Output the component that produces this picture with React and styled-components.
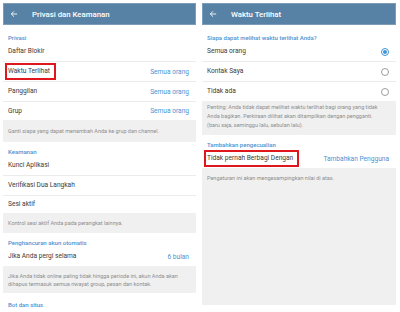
import React from "react"
import styled, { createGlobalStyle } from "styled-components"

const GlobalStyle = createGlobalStyle`
  body {
    margin: 0;
    background: #ffffff;
    font-family: Roboto, "Liberation Sans", sans-serif;
  }
`

const Page = styled.div`
  display: flex;
  gap: 6px;
  padding: 3px 4px 0 3px;
  width: 400px;
  height: 312px;
  box-sizing: border-box;
  overflow: hidden;
`

const Screen = styled.div`
  display: flex;
  flex-direction: column;
  width: ${props => props.width}px;
  height: ${props => props.height}px;
  background: #ffffff;
  overflow: hidden;
`

const Header = styled.div`
  display: flex;
  align-items: center;
  gap: 14px;
  height: 22px;
  flex-shrink: 0;
  padding-left: 7px;
  background: #5782a6;
  box-shadow: inset 0 0 0 1px #7c9dba;
`

const Title = styled.span`
  color: #ffffff;
  font-size: 7.8px;
  font-weight: 500;
`

const SectionLabel = styled.div`
  padding: ${props => props.top || 5}px 5px 0;
  line-height: 9px;
  font-size: 6px;
  font-weight: 500;
  color: #4a93d2;
  flex-shrink: 0;
`

const Row = styled.div`
  display: flex;
  align-items: center;
  justify-content: space-between;
  height: ${props => props.h || 20}px;
  box-sizing: border-box;
  padding: 0 7px 0 5px;
  flex-shrink: 0;
  font-size: 6.6px;
  color: #3a3a3a;
  border-bottom: ${props => (props.last ? "none" : "1px solid #ececec")};
`

const RowLabel = styled.span`
  position: relative;
  line-height: 9px;

  &::after {
    content: "";
    display: ${props => (props.marked ? "block" : "none")};
    position: absolute;
    top: -4px;
    bottom: -4px;
    left: -3px;
    right: -6px;
    border: 2px solid #e0161d;
  }
`

const Value = styled.span`
  color: #4a93d2;
`

const Note = styled.div`
  background: #f0f0f0;
  color: #8e8e8e;
  font-size: 5.5px;
  line-height: ${props => props.lh || 8}px;
  padding: ${props => props.pad || "7px 5px"};
  flex-shrink: 0;
`

const Fill = styled(Note)`
  flex: 1;
`

const Radio = styled.span`
  width: 8px;
  height: 8px;
  box-sizing: border-box;
  border-radius: 50%;
  border: 1px solid ${props => (props.on ? "#3f95d9" : "#9d9d9d")};
  display: flex;
  align-items: center;
  justify-content: center;

  &::after {
    content: "";
    display: ${props => (props.on ? "block" : "none")};
    width: 4px;
    height: 4px;
    border-radius: 50%;
    background: #3f95d9;
  }
`

const Back = () => (
  <svg width="8" height="8" viewBox="0 0 24 24" fill="none">
    <path
      d="M20 12H5M11 5l-7 7 7 7"
      stroke="#ffffff"
      strokeWidth="2.6"
      strokeLinecap="square"
    />
  </svg>
)

const App = () => {
  return (
    <>
      <GlobalStyle />
      <Page>
        <Screen width={193} height={309}>
          <Header>
            <Back />
            <Title>Privasi dan Keamanan</Title>
          </Header>
          <SectionLabel top={8}>Privasi</SectionLabel>
          <Row>
            <RowLabel>Daftar Blokir</RowLabel>
          </Row>
          <Row>
            <RowLabel marked>Waktu Terlihat</RowLabel>
            <Value>Semua orang</Value>
          </Row>
          <Row>
            <RowLabel>Panggilan</RowLabel>
            <Value>Semua orang</Value>
          </Row>
          <Row last h={18}>
            <RowLabel>Grup</RowLabel>
            <Value>Semua orang</Value>
          </Row>
          <Note>Ganti siapa yang dapat menambah Anda ke grup dan channel.</Note>
          <SectionLabel>Keamanan</SectionLabel>
          <Row>
            <RowLabel>Kunci Aplikasi</RowLabel>
          </Row>
          <Row>
            <RowLabel>Verifikasi Dua Langkah</RowLabel>
          </Row>
          <Row last h={17}>
            <RowLabel>Sesi aktif</RowLabel>
          </Row>
          <Note pad="6px 5px">Kontrol sesi aktif Anda pada perangkat lainnya.</Note>
          <SectionLabel>Penghancuran akun otomatis</SectionLabel>
          <Row last h={19}>
            <RowLabel>Jika Anda pergi selama</RowLabel>
            <Value>6 bulan</Value>
          </Row>
          <Note pad="6px 5px 5px">
            Jika Anda tidak online paling tidak hingga periode ini, akun Anda akan
            <br />
            dihapus termasuk semua riwayat group, pesan dan kontak.
          </Note>
          <SectionLabel top={7}>Bot dan situs</SectionLabel>
        </Screen>

        <Screen width={194} height={302}>
          <Header>
            <Back />
            <Title>Waktu Terlihat</Title>
          </Header>
          <SectionLabel top={8}>Siapa dapat melihat waktu terlihat Anda?</SectionLabel>
          <Row>
            <RowLabel>Semua orang</RowLabel>
            <Radio on />
          </Row>
          <Row>
            <RowLabel>Kontak Saya</RowLabel>
            <Radio />
          </Row>
          <Row last h={19}>
            <RowLabel>Tidak ada</RowLabel>
            <Radio />
          </Row>
          <Note lh={9} pad="2px 5px 5px">
            Penting: Anda tidak dapat melihat waktu terlihat bagi orang yang tidak
            <br />
            Anda bagikan. Perkiraan dilihat akan ditampilkan dengan pengganti.
            <br />
            (baru saja, seminggu lalu, sebulan lalu).
          </Note>
          <SectionLabel top={5}>Tambahkan pengecualian</SectionLabel>
          <Row last h={19}>
            <RowLabel marked>Tidak pernah Berbagi Dengan</RowLabel>
            <Value>Tambahkan Pengguna</Value>
          </Row>
          <Fill lh={9} pad="6px 5px">
            Pengaturan ini akan mengesampingkan nilai di atas.
          </Fill>
        </Screen>
      </Page>
    </>
  )
}

export default App
